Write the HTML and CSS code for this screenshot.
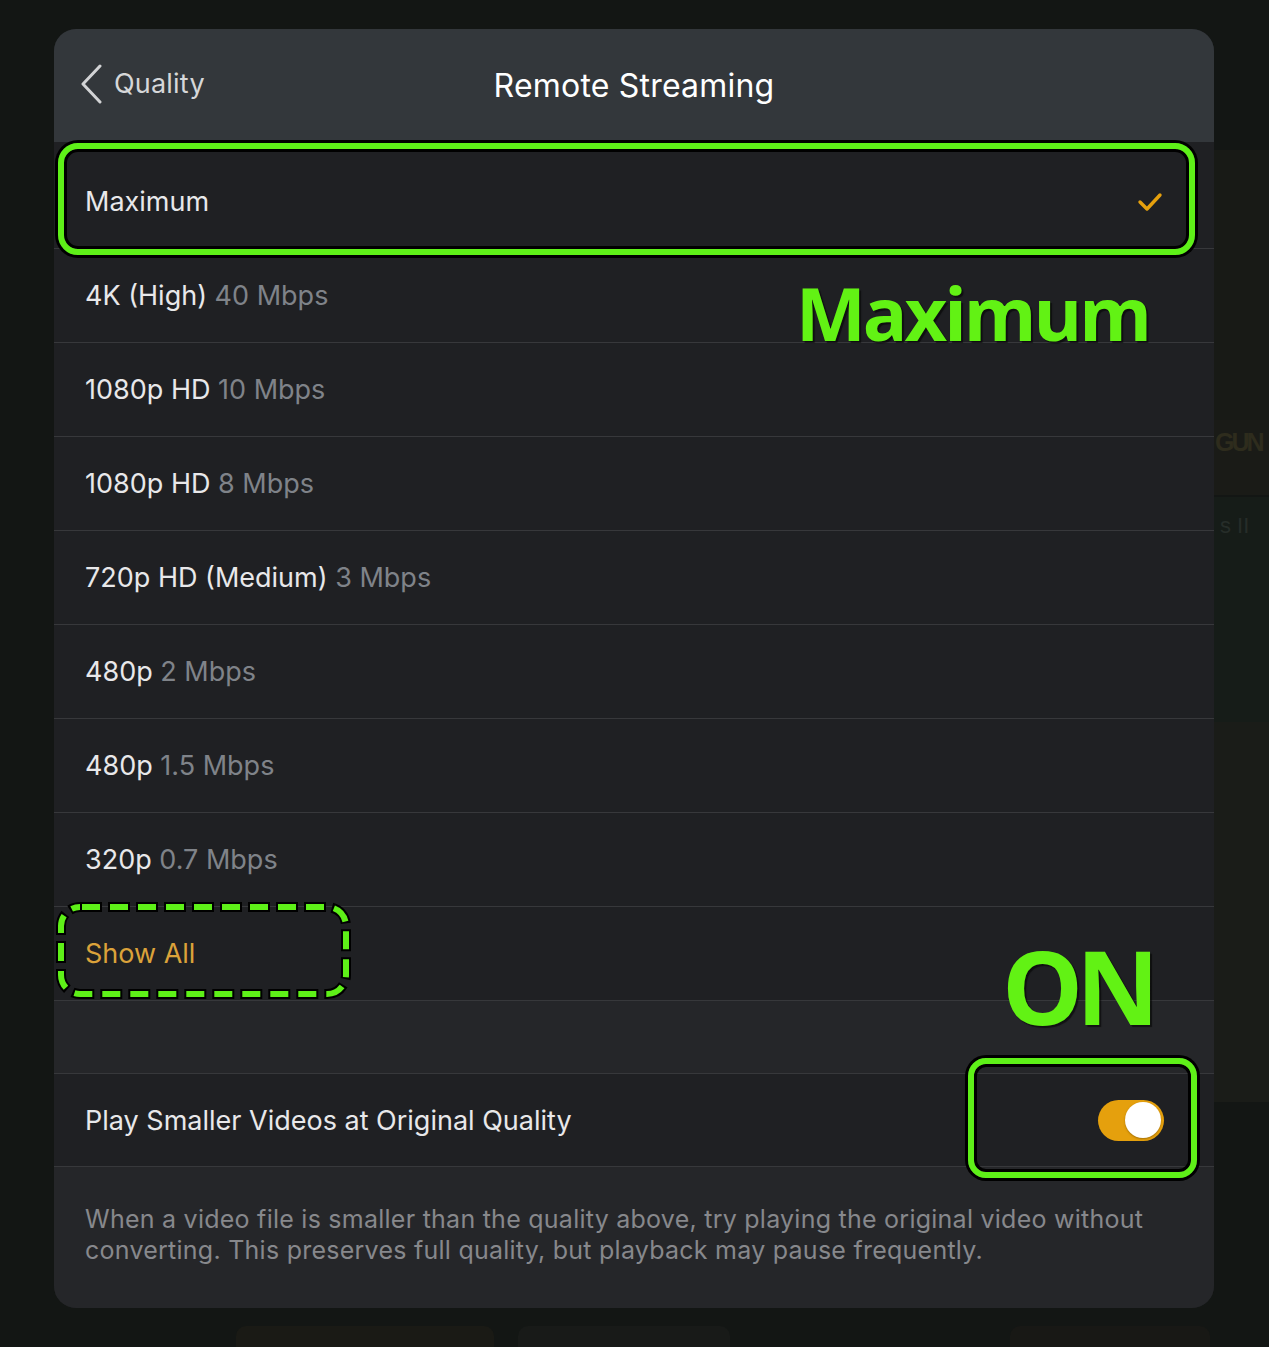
FILE: index.html
```html
<!DOCTYPE html>
<html lang="en">
<head>
<meta charset="utf-8">
<title>Remote Streaming</title>
<link rel="stylesheet" href="styles.css">
</head>
<body>
<div class="backdrop" aria-hidden="true">
  <div class="poster poster-a"></div>
  <div class="poster poster-b"><span>GUN</span></div>
  <div class="poster poster-c"><span>s II</span></div>
  <div class="poster poster-d"></div>
  <div class="card card-a"></div>
  <div class="card card-b"></div>
  <div class="card card-c"></div>
</div>

<main class="sheet">
  <header class="nav">
    <a class="back" href="#">
      <svg class="chevron" width="24" height="40" viewBox="0 0 24 40"><path d="M20 2 L3 20 L20 38" fill="none" stroke="#d2d3d5" stroke-width="3" stroke-linecap="round" stroke-linejoin="round"/></svg>
      <span>Quality</span>
    </a>
    <h1 class="title">Remote Streaming</h1>
    <span></span>
  </header>

  <ul class="list">
    <li class="row selected"><span class="text">Maximum</span>
      <svg class="check" width="26" height="22" viewBox="0 0 26 22"><path d="M3 11 L10 18 L23 4" fill="none" stroke="#e5a00d" stroke-width="3.4" stroke-linecap="round" stroke-linejoin="round"/></svg>
    </li>
    <li class="row"><span class="text">4K (High) <span class="sub">40 Mbps</span></span></li>
    <li class="row"><span class="text">1080p HD <span class="sub">10 Mbps</span></span></li>
    <li class="row"><span class="text">1080p HD <span class="sub">8 Mbps</span></span></li>
    <li class="row"><span class="text">720p HD (Medium) <span class="sub">3 Mbps</span></span></li>
    <li class="row"><span class="text">480p <span class="sub">2 Mbps</span></span></li>
    <li class="row"><span class="text">480p <span class="sub">1.5 Mbps</span></span></li>
    <li class="row"><span class="text">320p <span class="sub">0.7 Mbps</span></span></li>
    <li class="row"><span class="text link">Show All</span></li>
  </ul>

  <div class="spacer"></div>

  <div class="row toggle-row">
    <span class="text">Play Smaller Videos at Original Quality</span>
    <span class="switch"><span class="knob"></span></span>
  </div>

  <p class="footnote">When a video file is smaller than the quality above, try playing the original video without converting. This preserves full quality, but playback may pause frequently.</p>

  <div class="hl hl-max"></div>
  <div class="label label-max">Maximum</div>
  <svg class="hl-show" width="295" height="97" viewBox="0 0 295 97">
    <rect x="5" y="5" width="285" height="87" rx="19" fill="none" stroke="#000" stroke-width="10" stroke-dasharray="22 6"/>
    <rect x="5" y="5" width="285" height="87" rx="19" fill="none" stroke="#5ef018" stroke-width="6" stroke-dasharray="18 10" stroke-dashoffset="-2"/>
  </svg>
  <div class="label label-on">ON</div>
  <div class="hl hl-toggle"></div>
</main>
</body>
</html>
```
FILE: styles.css
```css
* { box-sizing: border-box; }

html, body {
  margin: 0;
  padding: 0;
}

body {
  width: 1269px;
  height: 1347px;
  overflow: hidden;
  background: #131614;
  font-family: Inter, "Noto Sans", "Liberation Sans", sans-serif;
  position: relative;
}

/* content behind the modal */
.backdrop {
  position: absolute;
  inset: 0;
}
.poster { position: absolute; left: 1214px; width: 55px; overflow: hidden; }
.poster-a { top: 150px; height: 270px; background: #181a16; }
.poster-b { top: 420px; height: 75px; background: #1a1b17; }
.poster-b span {
  display: block;
  margin: 8px 0 0 1px;
  font: 700 25px "Liberation Sans", sans-serif;
  color: #2e2c1d;
  letter-spacing: -3px;
}
.poster-c { top: 497px; height: 225px; background: #161c18; }
.poster-c span {
  display: block;
  margin: 16px 0 0 6px;
  font: 400 22px "Liberation Sans", sans-serif;
  color: #262d29;
}
.poster-d { top: 722px; height: 380px; background: #1a1c18; }
.card { position: absolute; top: 1326px; height: 30px; border-radius: 10px; }
.card-a { left: 236px; width: 258px; background: #1a1a15; }
.card-b { left: 518px; width: 212px; background: #181a18; }
.card-c { left: 1010px; width: 200px; background: #181815; }

/* modal */
.sheet {
  position: relative;
  width: 1160px;
  margin: 29px 0 0 54px;
  border-radius: 22px;
  background: #1f2023;
}

.nav {
  height: 113px;
  display: grid;
  grid-template-columns: 1fr auto 1fr;
  align-items: center;
  background: #33373b;
  border-radius: 22px 22px 0 0;
}

.back {
  display: flex;
  align-items: center;
  gap: 10px;
  padding-left: 26px;
  margin-top: -4px;
  color: #d6d7d9;
  text-decoration: none;
  font-size: 27px;
  letter-spacing: 0.2px;
}
.chevron { display: block; }

.title {
  margin: 0;
  font-size: 32px;
  font-weight: 400;
  color: #ffffff;
  letter-spacing: 0.2px;
}

.list {
  list-style: none;
  margin: 0;
  padding: 13px 0 0;
  background: #1f2023;
}

.row {
  height: 94px;
  display: flex;
  align-items: center;
  padding: 0 50px 0 31px;
  border-bottom: 1px solid #37383b;
  font-size: 27px;
  color: #e8e8ea;
}

.text { color: #e8e8ea; white-space: pre; }
.sub { color: #7f8389; }
.link { color: #dba23a; }

.selected { justify-content: space-between; }
.check { display: block; margin-right: 1px; }

.spacer {
  height: 72px;
  background: #252629;
}

.toggle-row {
  justify-content: space-between;
  border-top: 1px solid #37383b;
  background: #1f2023;
}

.switch {
  width: 66px;
  height: 41px;
  border-radius: 21px;
  background: #e5a00d;
  display: flex;
  align-items: center;
  justify-content: flex-end;
  padding-right: 3px;
}
.knob {
  width: 36px;
  height: 36px;
  border-radius: 50%;
  background: #ffffff;
  box-shadow: 0 1px 2px rgba(120, 80, 0, 0.6);
}

.footnote {
  margin: 0;
  padding: 37px 50px 0 31px;
  height: 141px;
  font-size: 25px;
  line-height: 31px;
  letter-spacing: 0.25px;
  color: #87888c;
  background: #252629;
  border-radius: 0 0 22px 22px;
}

/* annotations */
.hl {
  position: absolute;
  border: 6px solid #5ef018;
  border-radius: 20px;
  box-shadow: 0 0 0 3px #000, inset 0 0 0 3px #000;
}
.hl-max { left: 4px; top: 114px; width: 1137px; height: 112px; }
.hl-toggle { left: 914px; top: 1029px; width: 229px; height: 120px; border-radius: 18px; }

.hl-show {
  position: absolute;
  left: 2px;
  top: 873px;
  display: block;
}

.label {
  position: absolute;
  font-family: "Open Sans", "Liberation Sans", sans-serif;
  font-weight: 700;
  line-height: 1;
  color: #62f214;
  text-shadow: 2px 2px 1px rgba(0, 0, 0, 0.55);
  white-space: nowrap;
}
.label-max {
  left: 742px;
  top: 247px;
  font-size: 74px;
  letter-spacing: -3px;
}
.label-on {
  left: 948px;
  top: 906px;
  font-size: 102px;
  letter-spacing: -7px;
}
```
